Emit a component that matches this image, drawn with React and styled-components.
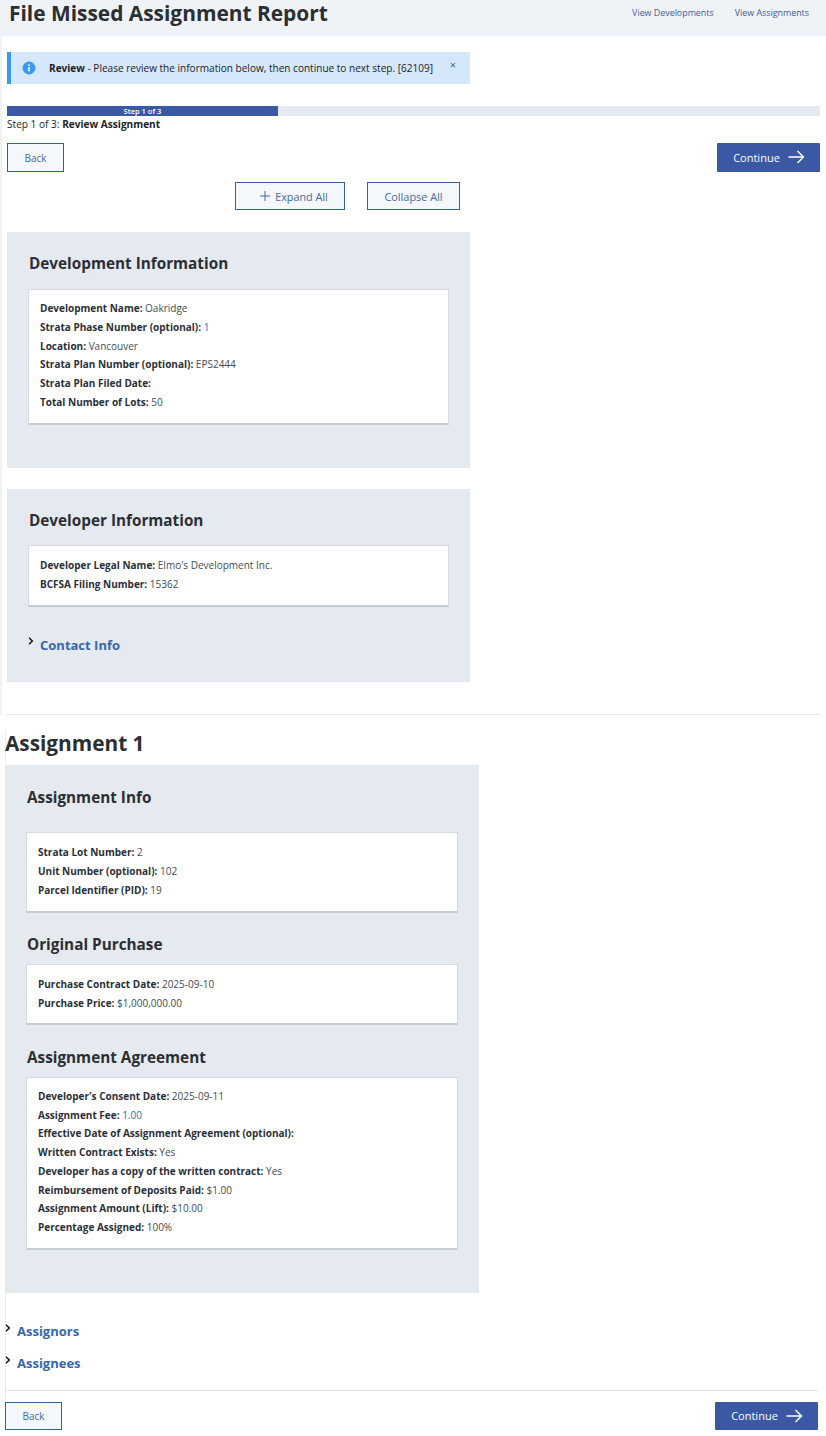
import React from "react";
import styled, { createGlobalStyle } from "styled-components";

const GlobalStyle = createGlobalStyle`
  html, body {
    margin: 0;
    padding: 0;
    background: #fff;
  }
  body {
    font-family: "Open Sans", "Noto Sans", sans-serif;
    font-size: 10px;
    color: #212529;
  }
`;

const Page = styled.div`
  width: 826px;
  height: 1436px;
  overflow: hidden;
`;

const TopBlock = styled.div`
  border-left: 2px solid #f1f2f4;
`;

const Header = styled.header`
  height: 36px;
  background: #eff3f7;
  display: flex;
  justify-content: space-between;
  padding: 0 17px 0 7px;
  box-sizing: border-box;
`;

const Title = styled.h1`
  margin: 0;
  font-size: 20.9px;
  line-height: 27px;
  font-weight: 700;
  color: #2b2f33;
`;

const TopLinks = styled.nav`
  display: flex;
  gap: 21px;
  padding-top: 6px;
`;

const TopLink = styled.a`
  font-size: 8.9px;
  line-height: 13px;
  color: #3d5c9c;
`;

const TopSection = styled.section`
  padding: 0 6px 0 5px;
`;

const Alert = styled.div`
  position: relative;
  width: 463px;
  height: 32px;
  margin-top: 16px;
  box-sizing: border-box;
  background: #d5e8fb;
  border-left: 4px solid #3b9af0;
  display: flex;
  align-items: center;
  padding-left: 11px;
  font-size: 10.05px;
  color: #1d2125;
  gap: 13px;
  svg {
    flex: none;
  }
  b {
    font-weight: 700;
  }
`;

const Dismiss = styled.span`
  position: absolute;
  right: 14px;
  top: 7px;
  font-size: 11px;
  line-height: 12px;
  color: #3d5c9c;
`;

const Progress = styled.div`
  margin-top: 22px;
  height: 10px;
  background: #e5eaf1;
`;

const ProgressFill = styled.div`
  width: 271px;
  height: 10px;
  background: #3a58a4;
  color: #fff;
  font-size: 7.5px;
  font-weight: 600;
  line-height: 10px;
  text-align: center;
`;

const StepText = styled.p`
  margin: 0;
  font-size: 10.1px;
  line-height: 17px;
  b {
    font-weight: 700;
  }
`;

const ButtonRow = styled.div`
  display: flex;
  justify-content: space-between;
  margin-top: ${(p) => p.$top || 0}px;
`;

const Button = styled.button`
  height: ${(p) => p.$height || 29}px;
  width: ${(p) => p.$width}px;
  box-sizing: border-box;
  padding: 0 0 0 ${(p) => p.$indent || 0}px;
  border: 1px solid #2e63a6;
  border-radius: 0;
  background: #f4f7fb;
  color: #47689f;
  font-family: inherit;
  font-size: ${(p) => p.$size || 10}px;
  display: inline-flex;
  align-items: center;
  justify-content: center;
  gap: 5px;
`;

const PrimaryButton = styled(Button)`
  border: 0;
  border-radius: 1px;
  background: #3a58a4;
  color: #fff;
  font-size: 11px;
  gap: 8px;
  padding-bottom: 1px;
  padding-left: 1px;
`;

const ExpandRow = styled.div`
  display: flex;
  gap: 22px;
  margin: 10px 0 0 228px;
`;

const Panel = styled.div`
  width: ${(p) => p.$width}px;
  height: ${(p) => p.$height}px;
  margin-top: ${(p) => p.$top}px;
  box-sizing: border-box;
  background: #e5eaf1;
  padding: 0 21px;
  overflow: hidden;
`;

const PanelTitle = styled.h3`
  margin: ${(p) => p.$top}px 0 ${(p) => p.$bottom}px;
  padding-left: 1px;
  font-size: 15.3px;
  line-height: 20px;
  font-weight: 700;
  color: #2b2f33;
`;

const Card = styled.div`
  background: #fff;
  border: 1px solid #d5dbe3;
  border-bottom: 2px solid #c5cdd6;
  padding: ${(p) => p.$pad}px 11px ${(p) => p.$padBottom}px;
`;

const Line = styled.div`
  font-size: 10px;
  line-height: 18.75px;
  color: #2b3038;
  b {
    font-weight: 700;
  }
`;

const Value = styled.span`
  color: ${(p) => (p.$link ? "#2e6fb0" : "#3f4a58")};
`;

const Toggle = styled.div`
  position: relative;
  padding-left: 12px;
  margin-top: ${(p) => p.$top}px;
  font-size: 13px;
  line-height: 18px;
  font-weight: 700;
  color: #3567ab;
  svg {
    position: absolute;
    left: 0;
    top: ${(p) => p.$chevronTop}px;
  }
`;

const Rule = styled.hr`
  margin: ${(p) => p.$top}px 0 0;
  border: 0;
  border-top: 1px solid #e2e4e7;
`;

const BottomSection = styled.section`
  margin: 15px 8px 0 5px;
  box-shadow: inset 1px 0 0 #e9ebee;
`;

const AssignmentTitle = styled.h2`
  margin: 0 0 8px;
  font-size: 20.8px;
  line-height: 27px;
  font-weight: 700;
  color: #2b2f33;
`;

const Arrow = () => (
  <svg width="17" height="14" viewBox="0 0 17 14" fill="none" stroke="#fff" strokeWidth="1.4">
    <path d="M0.5 7H15.5M9.5 1L15.5 7L9.5 13" />
  </svg>
);

const Chevron = () => (
  <svg width="6" height="8" viewBox="0 0 6 8" fill="none" stroke="#111" strokeWidth="1.4">
    <path d="M1 .8L4.4 4L1 7.2" />
  </svg>
);

const Row = ({ label, value, link }) => (
  <Line>
    <b>{label}:</b> <Value $link={link}>{value}</Value>
  </Line>
);

export default function App() {
  return (
    <Page>
      <GlobalStyle />
      <TopBlock>
        <Header>
          <Title>File Missed Assignment Report</Title>
          <TopLinks>
            <TopLink>View Developments</TopLink>
            <TopLink>View Assignments</TopLink>
          </TopLinks>
        </Header>

        <TopSection>
          <Alert>
            <svg width="14" height="14" viewBox="0 0 14 14">
              <circle cx="7" cy="7" r="6.5" fill="#3b9af0" />
              <rect x="6.2" y="6" width="1.6" height="4.4" fill="#fff" />
              <rect x="6.2" y="3.4" width="1.6" height="1.6" fill="#fff" />
            </svg>
            <span>
              <b>Review</b> - Please review the information below, then continue to next step. [62109]
            </span>
            <Dismiss>×</Dismiss>
          </Alert>

          <Progress>
            <ProgressFill>Step 1 of 3</ProgressFill>
          </Progress>
          <StepText>
            Step 1 of 3: <b>Review Assignment</b>
          </StepText>

          <ButtonRow $top={10}>
            <Button $width={57}>Back</Button>
            <PrimaryButton $width={103}>
              Continue <Arrow />
            </PrimaryButton>
          </ButtonRow>

          <ExpandRow>
            <Button $width={110} $height={28} $size={10.8} $indent={8}>
              <svg width="10" height="10" viewBox="0 0 10 10" stroke="#3f6aa5" strokeWidth="1">
                <path d="M5 0V10M0 5H10" />
              </svg>
              Expand All
            </Button>
            <Button $width={93} $height={28} $size={10.9}>Collapse All</Button>
          </ExpandRow>

          <Panel $width={463} $height={236} $top={22}>
            <PanelTitle $top={21} $bottom={16}>Development Information</PanelTitle>
            <Card $pad={9} $padBottom={11}>
              <Row label="Development Name" value="Oakridge" />
              <Row label="Strata Phase Number (optional)" value="1" link />
              <Row label="Location" value="Vancouver" />
              <Row label="Strata Plan Number (optional)" value="EPS2444" />
              <Row label="Strata Plan Filed Date" value="" />
              <Row label="Total Number of Lots" value="50" />
            </Card>
          </Panel>

          <Panel $width={463} $height={193} $top={21}>
            <PanelTitle $top={21} $bottom={15}>Developer Information</PanelTitle>
            <Card $pad={10} $padBottom={11}>
              <Row label="Developer Legal Name" value="Elmo's Development Inc." />
              <Row label="BCFSA Filing Number" value="15362" />
            </Card>
            <Toggle $top={29} $chevronTop={1}>
              <Chevron />
              Contact Info
            </Toggle>
          </Panel>

          <Rule $top={32} />
        </TopSection>
      </TopBlock>

      <BottomSection>
        <AssignmentTitle>Assignment 1</AssignmentTitle>
        <Panel $width={474} $height={528} $top={0}>
          <PanelTitle $top={22} $bottom={25}>Assignment Info</PanelTitle>
          <Card $pad={10} $padBottom={12}>
            <Row label="Strata Lot Number" value="2" />
            <Row label="Unit Number (optional)" value="102" />
            <Row label="Parcel Identifier (PID)" value="19" />
          </Card>
          <PanelTitle $top={21} $bottom={10}>Original Purchase</PanelTitle>
          <Card $pad={10} $padBottom={10}>
            <Row label="Purchase Contract Date" value="2025-09-10" />
            <Row label="Purchase Price" value="$1,000,000.00" />
          </Card>
          <PanelTitle $top={22} $bottom={10}>Assignment Agreement</PanelTitle>
          <Card $pad={9} $padBottom={11}>
            <Row label="Developer's Consent Date" value="2025-09-11" />
            <Row label="Assignment Fee" value="1.00" link />
            <Row label="Effective Date of Assignment Agreement (optional)" value="" />
            <Row label="Written Contract Exists" value="Yes" />
            <Row label="Developer has a copy of the written contract" value="Yes" />
            <Row label="Reimbursement of Deposits Paid" value="$1.00" />
            <Row label="Assignment Amount (Lift)" value="$10.00" />
            <Row label="Percentage Assigned" value="100%" />
          </Card>
        </Panel>

        <Toggle $top={29} $chevronTop={2}>
          <Chevron />
          Assignors
        </Toggle>
        <Toggle $top={14} $chevronTop={2}>
          <Chevron />
          Assignees
        </Toggle>

        <Rule $top={18} />

        <ButtonRow $top={11}>
          <Button $width={57} $height={28}>Back</Button>
          <PrimaryButton $width={103} $height={28}>
            Continue <Arrow />
          </PrimaryButton>
        </ButtonRow>
      </BottomSection>
    </Page>
  );
}
